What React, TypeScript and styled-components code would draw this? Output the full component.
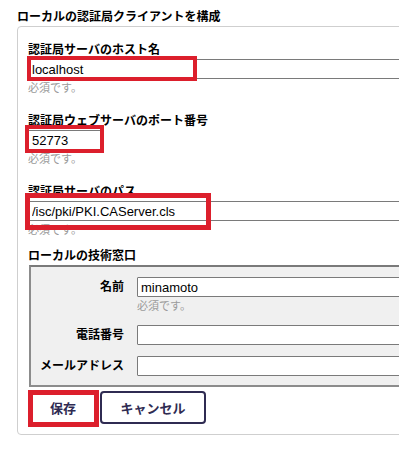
import React from "react";
import styled, {createGlobalStyle} from "styled-components";

const GlobalStyle = createGlobalStyle`
  html, body {
    margin: 0;
    padding: 0;
    background: #fff;
    overflow: hidden;
  }
  body {
    font-family: "Liberation Sans", "Noto Sans CJK JP", sans-serif;
    color: #000;
  }
`;

const App = () => {
    return (
        <Page>
            <GlobalStyle />
            <Title>ローカルの認証局クライアントを構成</Title>
            <Panel>
                <Field>
                    <Label>認証局サーバのホスト名</Label>
                    <Marked>
                        <TextInput defaultValue="localhost" />
                        <RedBox $top={-3} $left={-1} $width={170} $height={25} />
                    </Marked>
                    <Hint>必須です。</Hint>
                </Field>
                <Field>
                    <Label>認証局ウェブサーバのポート番号</Label>
                    <Marked>
                        <TextInput defaultValue="52773" $width={73} />
                        <RedBox $top={-5} $left={-3} $width={79} $height={28} />
                    </Marked>
                    <Hint>必須です。</Hint>
                </Field>
                <Field>
                    <Label>認証局サーバのパス</Label>
                    <Marked>
                        <TextInput defaultValue="/isc/pki/PKI.CAServer.cls" />
                        <RedBox $top={-8} $left={-3} $width={186} $height={37} $thick={5} />
                    </Marked>
                    <Hint>必須です。</Hint>
                </Field>
                <SubTitle>ローカルの技術窓口</SubTitle>
                <ContactBox>
                    <ContactRow>
                        <RowLabel>名前</RowLabel>
                        <RowInputs>
                            <TextInput defaultValue="minamoto" />
                            <Hint>必須です。</Hint>
                        </RowInputs>
                    </ContactRow>
                    <ContactRow>
                        <RowLabel>電話番号</RowLabel>
                        <RowInputs>
                            <TextInput defaultValue="" />
                        </RowInputs>
                    </ContactRow>
                    <ContactRow>
                        <RowLabel>メールアドレス</RowLabel>
                        <RowInputs>
                            <TextInput defaultValue="" />
                        </RowInputs>
                    </ContactRow>
                </ContactBox>
                <ButtonBar>
                    <Marked>
                        <Button $width={70}>保存</Button>
                        <RedBox $top={-1} $left={0} $width={71} $height={37} $thick={5} />
                    </Marked>
                    <Button $width={106}>キャンセル</Button>
                </ButtonBar>
            </Panel>
        </Page>
    )
}

export default App;

const Page = styled.div`
  padding: 8px 0 0 17px;
  width: 470px;
`

const Title = styled.div`
  font-size: 12px;
  font-weight: bold;
  line-height: 18px;
  height: 18px;
`

const Panel = styled.div`
  border: 1px solid #cfcfcf;
  border-radius: 4px;
  padding: 14px 10px 10px 10px;
  display: flex;
  flex-direction: column;
`

const Field = styled.div`
  display: flex;
  flex-direction: column;
  margin-bottom: 16px;

  &:nth-of-type(3) {
    margin-bottom: 9px;
  }
`

const Label = styled.div`
  font-size: 12px;
  font-weight: bold;
  line-height: 18px;
`

const Marked = styled.div`
  position: relative;
  display: flex;
`

const RedBox = styled.div<{$top: number; $left: number; $width: number; $height: number; $thick?: number}>`
  position: absolute;
  top: ${(p) => p.$top}px;
  left: ${(p) => p.$left}px;
  width: ${(p) => p.$width}px;
  height: ${(p) => p.$height}px;
  box-sizing: border-box;
  border: ${(p) => p.$thick || 4}px solid #dc1f2c;
  pointer-events: none;
`

const TextInput = styled.input<{$width?: number}>`
  box-sizing: border-box;
  height: 20px;
  width: ${(p) => (p.$width ? `${p.$width}px` : "100%")};
  border: 1px solid #7a7a7a;
  border-radius: 1px;
  padding: 0 4px 0 3px;
  font-family: "Liberation Sans", sans-serif;
  font-size: 13px;
  color: #000;
  background: #fff;
  outline: none;
`

const Hint = styled.div`
  margin-top: 1px;
  font-size: 11px;
  line-height: 16px;
  color: #9a9a9a;
`

const SubTitle = styled.div`
  font-size: 12px;
  font-weight: bold;
  line-height: 18px;
`

const ContactBox = styled.div`
  margin-left: 1px;
  border: 2px solid #8c8c8c;
  border-top-color: #7a7a7a;
  background: #f0f0f0;
  padding: 10px 0 9px 0;
  display: flex;
  flex-direction: column;
  gap: 11px;
`

const ContactRow = styled.div`
  display: flex;
  align-items: flex-start;
`

const RowLabel = styled.div`
  width: 93px;
  flex: none;
  text-align: right;
  font-size: 12px;
  font-weight: bold;
  line-height: 20px;
  margin-right: 13px;
`

const RowInputs = styled.div`
  flex: 1;
  display: flex;
  flex-direction: column;
`

const ButtonBar = styled.div`
  display: flex;
  gap: 2px;
  margin-top: 4px;
`

const Button = styled.button<{$width: number}>`
  box-sizing: border-box;
  width: ${(p) => p.$width}px;
  height: 33px;
  background: #fff;
  border: 2px solid #2f2b52;
  border-radius: 4px;
  color: #2f2b52;
  font-family: "Liberation Sans", "Noto Sans CJK JP", sans-serif;
  font-size: 13px;
  font-weight: bold;
  padding: 0;
`
